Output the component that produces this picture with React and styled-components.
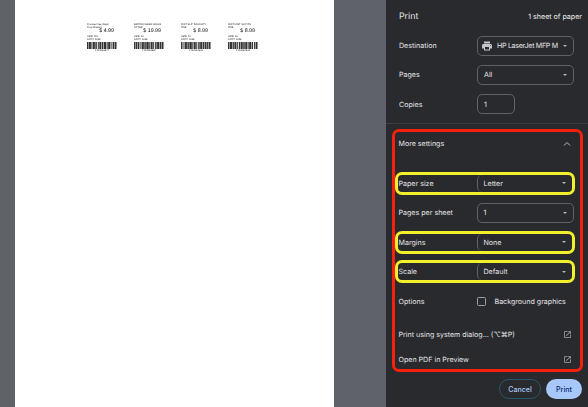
import React from 'react';
import styled, { createGlobalStyle } from 'styled-components';

const GlobalStyle = createGlobalStyle`
  html,
  body {
    margin: 0;
    background: #5f6268;
    font-family: Inter, "Liberation Sans", sans-serif;
    text-rendering: geometricPrecision;
  }
`;

const Window = styled.div`
  display: flex;
  width: 588px;
  height: 407px;
  overflow: hidden;
`;

const Preview = styled.div`
  width: 386px;
  padding-left: 15px;
  box-sizing: border-box;
  background: #5f6268;
`;

const Paper = styled.div`
  display: flex;
  gap: 17px;
  width: 319px;
  height: 407px;
  padding: 24px 0 0 72px;
  box-sizing: border-box;
  background: #fff;
`;

const Label = styled.div`
  display: flex;
  flex-direction: column;
  width: 30px;
  color: #222;
  font-family: "Liberation Sans", sans-serif;
  font-size: 2.5px;
  line-height: 2.7px;
  filter: blur(0.4px);
`;

const LabelTitle = styled.div`
  height: 5px;
  white-space: nowrap;
`;

const Price = styled.div`
  height: 5px;
  padding-right: 3px;
  color: #111;
  font-size: 5.3px;
  line-height: 5px;
  text-align: right;
`;

const LabelMeta = styled.div`
  height: 6px;
  margin-top: 2px;
`;

const Barcode = styled.svg`
  display: block;
  width: 30px;
  height: 7px;
`;

const BarcodeNumber = styled.div`
  margin-top: 0.5px;
  text-align: center;
`;

const Sidebar = styled.aside`
  display: flex;
  flex-direction: column;
  width: 202px;
  height: 407px;
  box-sizing: border-box;
  background: #292a2d;
  color: #e3e4e7;
  font-size: 7.1px;
`;

const Header = styled.header`
  display: flex;
  align-items: center;
  justify-content: space-between;
  height: 32px;
  padding: 0 6px 0 13px;
`;

const Title = styled.h1`
  margin: 0;
  font-size: 8.8px;
  font-weight: 400;
`;

const SheetCount = styled.span`
  color: #eceded;
`;

const MainSettings = styled.div`
  display: flex;
  flex-direction: column;
  gap: 6.3px;
  height: 89px;
  padding: 2px 0 0 9.5px;
  border-bottom: 1px solid #3c3d41;
`;

const MoreSettings = styled.section`
  display: flex;
  flex-direction: column;
  height: 243px;
  margin: 5px 5px 0 6px;
  box-sizing: border-box;
  border: 3.5px solid #f5210d;
  border-radius: 7px;
`;

const Rows = styled.div`
  display: flex;
  flex-direction: column;
  gap: 6.5px;
`;

const Row = styled.div`
  display: grid;
  grid-template-columns: 78px 97px;
  align-items: center;
  width: 180px;
  height: 23px;
  padding-left: 3.5px;
  box-sizing: border-box;
  ${(p) =>
    p.$highlight &&
    `
    padding-left: 0.5px;
    border: 3px solid #f3ef2b;
    border-radius: 7px;
  `}
`;

const MoreHeader = styled.div`
  display: flex;
  align-items: center;
  justify-content: space-between;
  height: 23px;
  margin-bottom: 16.5px;
  padding: 0 8px 0 3.5px;
`;

const Select = styled.div`
  position: relative;
  display: flex;
  align-items: center;
  gap: 4px;
  height: 20px;
  padding-left: ${(p) => (p.$withIcon ? 3 : 6)}px;
  box-sizing: border-box;
  border: 1px solid #5f6268;
  border-radius: 5px;
  letter-spacing: ${(p) => (p.$withIcon ? '-0.3px' : 'normal')};
  white-space: nowrap;
  ${(p) =>
    p.$flush &&
    `
    height: 17px;
    width: 95.5px;
    border-width: 0 0 0 1px;
  `}

  &::after {
    content: '';
    position: absolute;
    top: 50%;
    right: 6px;
    margin-top: -1px;
    border: 2px solid transparent;
    border-top: 2px solid #b5b7ba;
    border-bottom: 0;
  }
`;

const CopiesInput = styled.div`
  display: flex;
  align-items: center;
  width: 38px;
  height: 20px;
  padding-left: 6px;
  box-sizing: border-box;
  border: 1px solid #5f6268;
  border-radius: 5px;
`;

const OptionValue = styled.label`
  display: flex;
  align-items: center;
  gap: 9px;
  white-space: nowrap;
`;

const Checkbox = styled.span`
  flex: none;
  width: 9px;
  height: 9px;
  box-sizing: border-box;
  border: 1px solid #9aa0a6;
  border-radius: 1.5px;
`;

const LinkRow = styled.div`
  display: flex;
  align-items: center;
  justify-content: space-between;
  flex: none;
  height: 17px;
  margin-top: ${(p) => p.$top}px;
  padding: 0 8px 0 3.5px;
`;

const Footer = styled.footer`
  display: flex;
  justify-content: flex-end;
  gap: 5px;
  margin-top: 7px;
  padding-right: 6px;
`;

const Button = styled.button`
  height: 20px;
  padding: 0;
  border-radius: 10px;
  font: 500 7.1px Inter, "Liberation Sans", sans-serif;
  ${(p) =>
    p.$primary
      ? `
    width: 36px;
    border: 0;
    background: #a8c7fa;
    color: #062e6f;
  `
      : `
    width: 42px;
    border: 1px solid #25566b;
    background: transparent;
    color: #a8c7fa;
  `}
`;

const Icon = styled.svg`
  flex: none;
  width: ${(p) => p.$size}px;
  height: ${(p) => p.$size}px;
  fill: ${(p) => p.$color};
`;

const PrinterIcon = () => (
  <Icon $size={12} $color="#c4c7ca" viewBox="0 0 24 24">
    <path d="M19 8H5c-1.66 0-3 1.34-3 3v6h4v4h12v-4h4v-6c0-1.66-1.34-3-3-3zm-3 11H8v-5h8v5zm3-7c-.55 0-1-.45-1-1s.45-1 1-1 1 .45 1 1-.45 1-1 1zm-1-9H6v4h12V3z" />
  </Icon>
);

const ExternalIcon = () => (
  <Icon $size={9} $color="#a4a7ab" viewBox="0 0 24 24">
    <path d="M19 19H5V5h7V3H5c-1.11 0-2 .9-2 2v14c0 1.1.89 2 2 2h14c1.1 0 2-.9 2-2v-7h-2v7zM14 3v2h3.59l-9.83 9.83 1.41 1.41L19 6.41V10h2V3h-7z" />
  </Icon>
);

const ChevronUp = () => (
  <Icon $size={10} $color="none" viewBox="0 0 10 10">
    <path d="M2 6.5 5 3.5 8 6.5" stroke="#b9bbbe" strokeWidth="1" />
  </Icon>
);

const barWidths = [3, 1, 4, 1, 2, 1, 4, 1, 3, 2, 2, 1, 4, 1, 3, 1, 5, 1, 2, 1, 4, 1, 2, 2, 3, 1, 4, 1];

const BarcodeGraphic = ({ shift }) => {
  let x = 0;
  const bars = [];
  barWidths.forEach((_, i) => {
    const width = barWidths[(i + shift) % barWidths.length];
    if (i % 2 === 0) bars.push(<rect key={i} x={x} y="0" width={width} height="14" fill="#333" />);
    x += width;
  });
  return (
    <Barcode viewBox={`0 0 ${x} 14`} preserveAspectRatio="none">
      {bars}
    </Barcode>
  );
};

const labels = [
  { title: ['Crooked Vee Waist/', 'Crop Missing'], price: '$ 4.99', size: 'SIZE: OS', code: '1709981874', shift: 0 },
  { title: ['BROWN SLEEK ANKLE', 'LITTER'], price: '$ 19.99', size: 'SIZE: 1X', code: '1709981887', shift: 4 },
  { title: ['MIST SLIP DAUGHTY', 'ONE'], price: '$ 8.99', size: 'SIZE: 1X', code: '1709984621', shift: 8 },
  { title: ['MIST MIST SLIP ON', 'ONE'], price: '$ 8.99', size: 'SIZE: 3X', code: '1709984633', shift: 14 },
];

const App = () => (
  <>
    <GlobalStyle />
    <Window>
      <Preview>
        <Paper>
          {labels.map((label) => (
            <Label key={label.code}>
              <LabelTitle>
                {label.title[0]}
                <br />
                {label.title[1]}
              </LabelTitle>
              <Price>{label.price}</Price>
              <LabelMeta>
                {label.size}
                <br />
                ACCT: 1098
              </LabelMeta>
              <BarcodeGraphic shift={label.shift} />
              <BarcodeNumber>{label.code}</BarcodeNumber>
            </Label>
          ))}
        </Paper>
      </Preview>
      <Sidebar>
        <Header>
          <Title>Print</Title>
          <SheetCount>1 sheet of paper</SheetCount>
        </Header>
        <MainSettings>
          <Row>
            <span>Destination</span>
            <Select $withIcon>
              <PrinterIcon />
              HP LaserJet MFP M
            </Select>
          </Row>
          <Row>
            <span>Pages</span>
            <Select>All</Select>
          </Row>
          <Row>
            <span>Copies</span>
            <CopiesInput>1</CopiesInput>
          </Row>
        </MainSettings>
        <MoreSettings>
          <MoreHeader>
            <span>More settings</span>
            <ChevronUp />
          </MoreHeader>
          <Rows>
            <Row $highlight>
              <span>Paper size</span>
              <Select $flush>Letter</Select>
            </Row>
            <Row>
              <span>Pages per sheet</span>
              <Select>1</Select>
            </Row>
            <Row $highlight>
              <span>Margins</span>
              <Select $flush>None</Select>
            </Row>
            <Row $highlight>
              <span>Scale</span>
              <Select $flush>Default</Select>
            </Row>
            <Row>
              <span>Options</span>
              <OptionValue>
                <Checkbox />
                Background graphics
              </OptionValue>
            </Row>
          </Rows>
          <LinkRow $top={13.5}>
            <span>Print using system dialog... (⌥⌘P)</span>
            <ExternalIcon />
          </LinkRow>
          <LinkRow $top={8}>
            <span>Open PDF in Preview</span>
            <ExternalIcon />
          </LinkRow>
        </MoreSettings>
        <Footer>
          <Button>Cancel</Button>
          <Button $primary>Print</Button>
        </Footer>
      </Sidebar>
    </Window>
  </>
);

export default App;
